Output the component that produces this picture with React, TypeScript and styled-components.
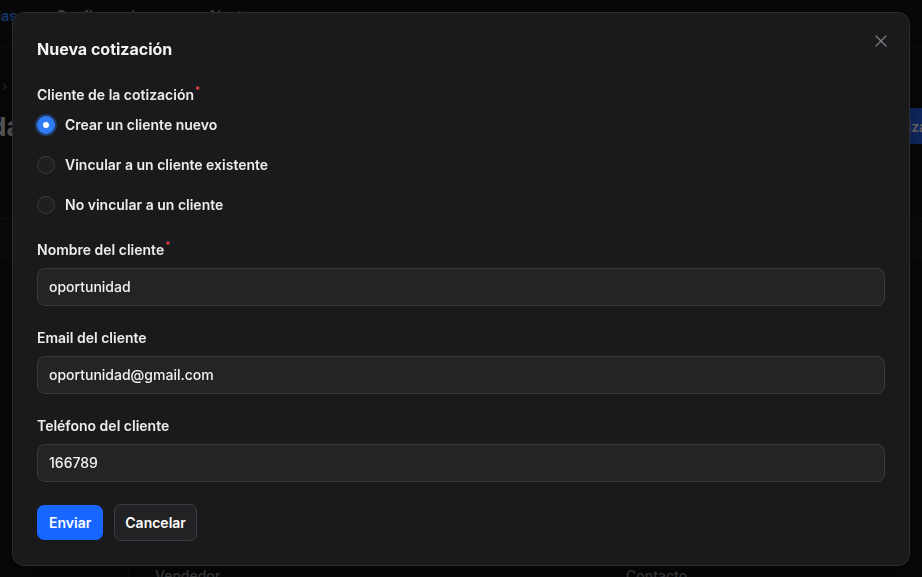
import styled, { createGlobalStyle } from 'styled-components';
import { X } from 'lucide-react';

const GlobalStyle = createGlobalStyle`
  html, body {
    margin: 0;
    padding: 0;
    height: 100%;
    overflow: hidden;
    background: #111114;
  }

  body {
    font-family: Inter, 'Noto Sans', sans-serif;
    -webkit-font-smoothing: antialiased;
  }
`;

/* ---------- page behind the dialog ---------- */

const Page = styled.div`
  height: 577px;
  display: flex;
  flex-direction: column;
  background: #121215;
  color: #e6e6e8;
  overflow: hidden;
`;

const TabBar = styled.nav`
  display: flex;
  gap: 39px;
  height: 47px;
  box-sizing: border-box;
  padding-top: 6px;
  align-items: flex-start;
  margin-left: -44px;
  border-bottom: 1px solid #232327;
  font-size: 14px;
  line-height: 20px;
  font-weight: 600;
`;

const Tab = styled.span<{ $active?: boolean }>`
  color: ${p => (p.$active ? '#3b82f6' : '#9a9aa0')};
`;

const Main = styled.div`
  display: flex;
  flex-direction: column;
  padding-top: 30px;
`;

const Crumbs = styled.div`
  color: #6c6c72;
  font-size: 14px;
  padding-left: 2px;
`;

const TitleRow = styled.div`
  display: grid;
  grid-template-columns: 823px max-content;
  align-items: center;
  margin-top: 14px;
`;

const PageTitle = styled.h2`
  margin: 0 0 0 -240px;
  font-size: 26px;
  font-weight: 700;
  color: #d8d8dc;
  white-space: nowrap;
`;

const NewQuoteButton = styled.div`
  background: #2563eb;
  color: #fff;
  font-size: 14px;
  font-weight: 600;
  height: 36px;
  display: flex;
  align-items: center;
  padding: 0 16px;
  border-radius: 6px;
  white-space: nowrap;
`;

const Card = styled.div`
  margin-top: 74px;
  height: 40px;
  background: #18181c;
  border-top: 1px solid #222226;
  border-bottom: 1px solid #222226;
`;

const TableHead = styled.div`
  margin-top: auto;
  margin-left: 128px;
  height: 14px;
  border-left: 1px solid #222226;
  display: grid;
  grid-template-columns: 471px 1fr;
  padding-left: 26px;
  font-size: 14px;
  font-weight: 500;
  color: #9a9aa0;
  overflow: hidden;
  line-height: 26px;
`;

/* ---------- dialog ---------- */

const Overlay = styled.div`
  position: fixed;
  inset: 0;
  background: rgba(0, 0, 0, 0.55);
  display: flex;
  align-items: center;
  justify-content: center;
`;

const Dialog = styled.div`
  position: relative;
  width: 898px;
  box-sizing: border-box;
  background: #1a1a1c;
  border: 1px solid #2c2c2f;
  border-radius: 12px;
  padding: 24px;
  display: flex;
  flex-direction: column;
  gap: 22px;
  box-shadow: 0 12px 40px rgba(0, 0, 0, 0.5);
`;

const Title = styled.h3`
  margin: 0 0 2px;
  font-size: 16px;
  line-height: 24px;
  font-weight: 700;
  color: #f4f4f5;
`;

const CloseButton = styled.button`
  position: absolute;
  top: 18px;
  right: 18px;
  width: 20px;
  height: 20px;
  padding: 0;
  border: none;
  background: none;
  color: #7c7c81;
  display: flex;
  align-items: center;
  justify-content: center;
  cursor: pointer;
`;

const Field = styled.div`
  display: flex;
  flex-direction: column;
  gap: 8px;
`;

const Label = styled.label`
  font-size: 14px;
  line-height: 20px;
  font-weight: 600;
  color: #ececee;
`;

const Required = styled.sup`
  color: #ef4444;
  font-size: 10px;
  line-height: 0;
  margin-left: 1px;
`;

const RadioList = styled.div`
  display: flex;
  flex-direction: column;
  gap: 16px;
  margin-bottom: 1px;
`;

const RadioRow = styled.label`
  display: flex;
  align-items: center;
  gap: 10px;
  height: 24px;
  font-size: 14px;
  font-weight: 600;
  color: #ececee;
  cursor: pointer;
`;

const RadioDot = styled.span<{ $checked?: boolean }>`
  width: 18px;
  height: 18px;
  box-sizing: border-box;
  border-radius: 50%;
  flex-shrink: 0;
  display: flex;
  align-items: center;
  justify-content: center;
  background: ${p => (p.$checked ? '#2f7cf6' : '#1f1f22')};
  border: 1px solid ${p => (p.$checked ? '#2f7cf6' : '#3d3d41')};
  box-shadow: ${p => (p.$checked ? '0 0 0 2px rgba(47, 124, 246, 0.35)' : 'none')};

  &::after {
    content: '';
    width: 6px;
    height: 6px;
    border-radius: 50%;
    background: #fff;
    display: ${p => (p.$checked ? 'block' : 'none')};
  }
`;

const Input = styled.input`
  height: 38px;
  box-sizing: border-box;
  width: 100%;
  background: #242426;
  border: 1px solid #3a3a3d;
  border-radius: 8px;
  padding: 0 11px;
  font-family: inherit;
  font-size: 14px;
  font-weight: 500;
  color: #f1f1f2;
  outline: none;
`;

const Actions = styled.div`
  display: flex;
  align-items: center;
  gap: 11px;
`;

const Button = styled.button<{ $primary?: boolean }>`
  height: ${p => (p.$primary ? '35px' : '37px')};
  padding: 0 ${p => (p.$primary ? '11px' : '10px')};
  border-radius: 7px;
  font-family: inherit;
  font-size: 14px;
  font-weight: 600;
  color: #fff;
  cursor: pointer;
  background: ${p => (p.$primary ? '#1766ff' : '#222225')};
  border: 1px solid ${p => (p.$primary ? '#1766ff' : '#3c3c40')};
`;

const options = ['Crear un cliente nuevo', 'Vincular a un cliente existente', 'No vincular a un cliente'];

const fields = [
  { label: 'Nombre del cliente', value: 'oportunidad', required: true },
  { label: 'Email del cliente', value: 'oportunidad@gmail.com' },
  { label: 'Teléfono del cliente', value: '166789' },
];

const App = () => {
  return (
    <>
      <GlobalStyle />
      <Page>
        <TabBar>
          <Tab $active>Plantillas</Tab>
          <Tab>Configuraciones</Tab>
          <Tab>Ajustes</Tab>
        </TabBar>
        <Main>
          <Crumbs>›</Crumbs>
          <TitleRow>
            <PageTitle>Cotizaciones guardadas</PageTitle>
            <NewQuoteButton>Nueva cotización</NewQuoteButton>
          </TitleRow>
          <Card />
        </Main>
        <TableHead>
          <span>Vendedor</span>
          <span>Contacto</span>
        </TableHead>
      </Page>

      <Overlay>
        <Dialog role="dialog">
          <Title>Nueva cotización</Title>
          <CloseButton aria-label="Cerrar">
            <X size={20} strokeWidth={1.5} />
          </CloseButton>

          <Field>
            <Label>
              Cliente de la cotización<Required>*</Required>
            </Label>
            <RadioList>
              {options.map((opt, i) => (
                <RadioRow key={opt}>
                  <RadioDot $checked={i === 0} />
                  {opt}
                </RadioRow>
              ))}
            </RadioList>
          </Field>

          {fields.map(f => (
            <Field key={f.label}>
              <Label>
                {f.label}
                {f.required && <Required>*</Required>}
              </Label>
              <Input defaultValue={f.value} />
            </Field>
          ))}

          <Actions>
            <Button $primary>Enviar</Button>
            <Button>Cancelar</Button>
          </Actions>
        </Dialog>
      </Overlay>
    </>
  );
};

export default App;
